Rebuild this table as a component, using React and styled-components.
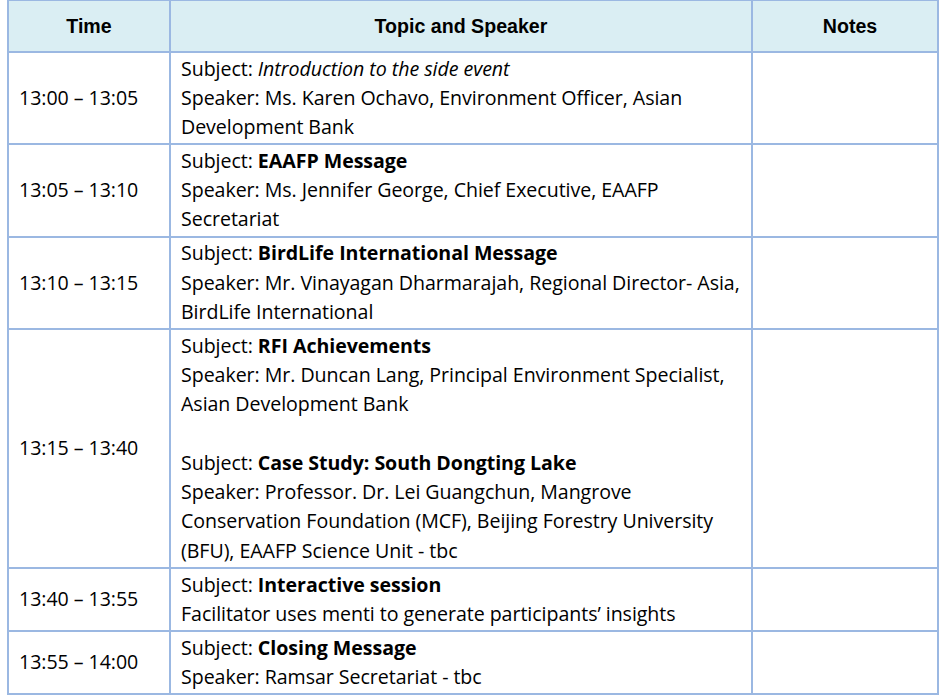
import React from "react";
import styled, { createGlobalStyle } from "styled-components";

const Global = createGlobalStyle`
  html, body { margin: 0; padding: 0; background: #ffffff; }
  body { font-family: "Open Sans", "Noto Sans", sans-serif; color: #000; }
`;

const Page = styled.div`
  padding: 0 0 0 7px;
  margin-top: -1px;
`;

const Table = styled.table`
  border-collapse: collapse;
  table-layout: fixed;
  width: 930px;
`;

const HeadCell = styled.th`
  background: #daeef3;
  border: 2px solid #9bb8e2;
  height: 50px;
  padding: 0 9px 0 ${(p) => (p.$shiftRight ? "19px" : "9px")};
  font-family: "Liberation Sans", Arial, sans-serif;
  font-weight: 700;
  font-size: 19.6px;
  text-align: center;
  vertical-align: middle;
  color: #000;
`;

const Cell = styled.td`
  border: 2px solid #9bb8e2;
  padding: 0.5px 9px 2px 10px;
  font-size: 19.6px;
  line-height: 29.3px;
  letter-spacing: -0.05px;
  vertical-align: ${(p) => (p.$middle ? "middle" : "top")};
  color: #000;
`;

const Line = styled.div`
  white-space: nowrap;
  min-height: 29.3px;
`;

const Strong = styled.b`
  font-weight: 700;
`;

const Em = styled.i`
  font-style: italic;
`;

const rows = [
  {
    time: "13:00 – 13:05",
    lines: [
      <>Subject: <Em>Introduction to the side event</Em></>,
      "Speaker: Ms. Karen Ochavo, Environment Officer, Asian",
      "Development Bank",
    ],
  },
  {
    time: "13:05 – 13:10",
    lines: [
      <>Subject: <Strong>EAAFP Message</Strong></>,
      "Speaker: Ms. Jennifer George, Chief Executive, EAAFP",
      "Secretariat",
    ],
  },
  {
    time: "13:10 – 13:15",
    lines: [
      <>Subject: <Strong>BirdLife International Message</Strong></>,
      "Speaker: Mr. Vinayagan Dharmarajah, Regional Director- Asia,",
      "BirdLife International",
    ],
  },
  {
    time: "13:15 – 13:40",
    lines: [
      <>Subject: <Strong>RFI Achievements</Strong></>,
      "Speaker: Mr. Duncan Lang, Principal Environment Specialist,",
      "Asian Development Bank",
      "",
      <>Subject: <Strong>Case Study: South Dongting Lake</Strong></>,
      "Speaker: Professor. Dr. Lei Guangchun, Mangrove",
      "Conservation Foundation (MCF), Beijing Forestry University",
      "(BFU), EAAFP Science Unit - tbc",
    ],
  },
  {
    time: "13:40 – 13:55",
    lines: [
      <>Subject: <Strong>Interactive session</Strong></>,
      "Facilitator uses menti to generate participants’ insights",
    ],
  },
  {
    time: "13:55 – 14:00",
    lines: [
      <>Subject: <Strong>Closing Message</Strong></>,
      "Speaker: Ramsar Secretariat - tbc",
    ],
  },
];

export default function App() {
  return (
    <Page>
      <Global />
      <Table>
        <colgroup>
          <col style={{ width: "162px" }} />
          <col style={{ width: "582px" }} />
          <col style={{ width: "186px" }} />
        </colgroup>
        <thead>
          <tr>
            <HeadCell>Time</HeadCell>
            <HeadCell>Topic and Speaker</HeadCell>
            <HeadCell $shiftRight>Notes</HeadCell>
          </tr>
        </thead>
        <tbody>
          {rows.map((r, i) => (
            <tr key={i}>
              <Cell $middle>{r.time}</Cell>
              <Cell>
                {r.lines.map((l, j) => (
                  <Line key={j}>{l}</Line>
                ))}
              </Cell>
              <Cell />
            </tr>
          ))}
        </tbody>
      </Table>
    </Page>
  );
}
